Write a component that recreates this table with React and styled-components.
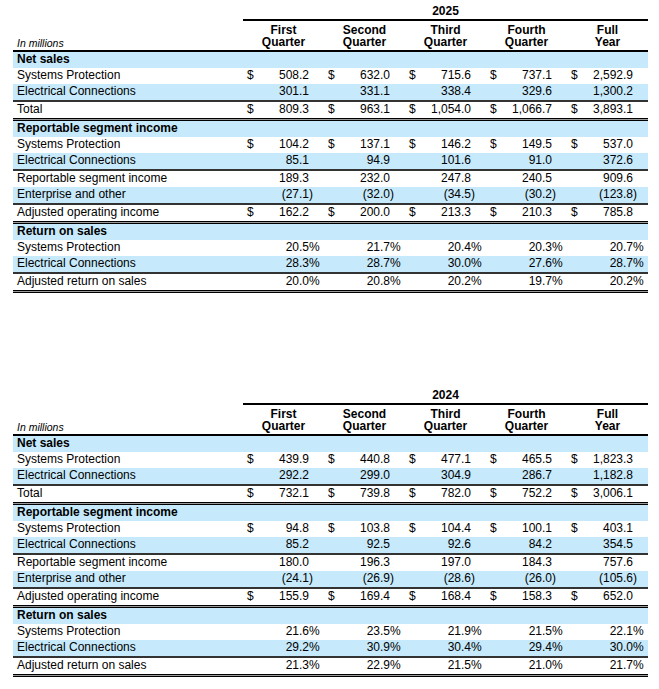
import React from 'react';
import styled, { createGlobalStyle } from 'styled-components';

const BLUE = '#c6e9fb';
const COLS = '230px 81px 81px 81px 81px 81px';
const QUARTERS = [
    ['First', 'Quarter'],
    ['Second', 'Quarter'],
    ['Third', 'Quarter'],
    ['Fourth', 'Quarter'],
    ['Full', 'Year'],
];

// values per year, same row layout for both tables
const buildSections = (v) => [
    {
        title: 'Net sales',
        lines: [
            { label: 'Systems Protection', dollar: true, values: v.netSp },
            { label: 'Electrical Connections', values: v.netEc, rule: true },
            { label: 'Total', dollar: true, values: v.netTotal },
        ],
    },
    {
        title: 'Reportable segment income',
        lines: [
            { label: 'Systems Protection', dollar: true, values: v.segSp },
            { label: 'Electrical Connections', values: v.segEc, rule: true },
            { label: 'Reportable segment income', values: v.segTotal },
            { label: 'Enterprise and other', values: v.other, rule: true },
            { label: 'Adjusted operating income', dollar: true, values: v.adj },
        ],
    },
    {
        title: 'Return on sales',
        lines: [
            { label: 'Systems Protection', values: v.rosSp },
            { label: 'Electrical Connections', values: v.rosEc, rule: true },
            { label: 'Adjusted return on sales', values: v.ros },
        ],
    },
];

const YEARS = [
    {
        year: '2025',
        sections: buildSections({
            netSp: ['508.2', '632.0', '715.6', '737.1', '2,592.9'],
            netEc: ['301.1', '331.1', '338.4', '329.6', '1,300.2'],
            netTotal: ['809.3', '963.1', '1,054.0', '1,066.7', '3,893.1'],
            segSp: ['104.2', '137.1', '146.2', '149.5', '537.0'],
            segEc: ['85.1', '94.9', '101.6', '91.0', '372.6'],
            segTotal: ['189.3', '232.0', '247.8', '240.5', '909.6'],
            other: ['(27.1)', '(32.0)', '(34.5)', '(30.2)', '(123.8)'],
            adj: ['162.2', '200.0', '213.3', '210.3', '785.8'],
            rosSp: ['20.5%', '21.7%', '20.4%', '20.3%', '20.7%'],
            rosEc: ['28.3%', '28.7%', '30.0%', '27.6%', '28.7%'],
            ros: ['20.0%', '20.8%', '20.2%', '19.7%', '20.2%'],
        }),
    },
    {
        year: '2024',
        sections: buildSections({
            netSp: ['439.9', '440.8', '477.1', '465.5', '1,823.3'],
            netEc: ['292.2', '299.0', '304.9', '286.7', '1,182.8'],
            netTotal: ['732.1', '739.8', '782.0', '752.2', '3,006.1'],
            segSp: ['94.8', '103.8', '104.4', '100.1', '403.1'],
            segEc: ['85.2', '92.5', '92.6', '84.2', '354.5'],
            segTotal: ['180.0', '196.3', '197.0', '184.3', '757.6'],
            other: ['(24.1)', '(26.9)', '(28.6)', '(26.0)', '(105.6)'],
            adj: ['155.9', '169.4', '168.4', '158.3', '652.0'],
            rosSp: ['21.6%', '23.5%', '21.9%', '21.5%', '22.1%'],
            rosEc: ['29.2%', '30.9%', '30.4%', '29.4%', '30.0%'],
            ros: ['21.3%', '22.9%', '21.5%', '21.0%', '21.7%'],
        }),
    },
];

function Value({ text, dollar }) {
    // ")" and "%" hang past the digit column like in the printed report
    const last = text.slice(-1);
    const hang = last === ')' || last === '%';
    return (
        <Cell>
            {dollar && <span>$</span>}
            <Amount>
                {hang ? text.slice(0, -1) : text}
                {hang && <Hang>{last}</Hang>}
            </Amount>
        </Cell>
    );
}

function YearTable({ year, sections }) {
    return (
        <Block>
            <YearRow>
                <YearLabel>{year}</YearLabel>
            </YearRow>
            <HeaderRow>
                <UnitLabel>In millions</UnitLabel>
                {QUARTERS.map(([a, b]) => (
                    <ColumnHead key={a}>
                        {a}
                        <br />
                        {b}
                    </ColumnHead>
                ))}
            </HeaderRow>
            {sections.map((section, i) => (
                <React.Fragment key={section.title}>
                    {i > 0 && <Rule $double />}
                    <Row $shade>
                        <Label $bold>{section.title}</Label>
                    </Row>
                    {section.lines.map((line, j) => (
                        <React.Fragment key={line.label}>
                            <Row $shade={j % 2 === 1}>
                                <Label>{line.label}</Label>
                                {line.values.map((val, k) => (
                                    <Value
                                        key={k}
                                        text={val}
                                        dollar={line.dollar}
                                    />
                                ))}
                            </Row>
                            {line.rule && <Rule />}
                        </React.Fragment>
                    ))}
                </React.Fragment>
            ))}
            <Rule $double />
        </Block>
    );
}

export default function App() {
    return (
        <>
            <GlobalStyle />
            <Page>
                {YEARS.map((y) => (
                    <YearTable key={y.year} {...y} />
                ))}
            </Page>
        </>
    );
}

const GlobalStyle = createGlobalStyle`
    body {
        margin: 0;
        background: #fff;
    }
`;

const Page = styled.div`
    width: 635px;
    padding-left: 13px;
    font-family: 'Liberation Sans', Arial, Helvetica, sans-serif;
    font-size: 12px;
    color: #000;
`;

const Block = styled.section`
    & + & {
        margin-top: 91px;
    }
`;

const YearRow = styled.div`
    display: grid;
    grid-template-columns: ${COLS};
    height: 19px;
`;

const YearLabel = styled.div`
    grid-column: 4;
    padding-top: 4px;
    text-align: center;
    font-weight: 700;
    line-height: 14px;
`;

const HeaderRow = styled.div`
    display: grid;
    grid-template-columns: ${COLS};
    height: 33px;
    box-sizing: border-box;
    border-bottom: 2px solid #000;
`;

const UnitLabel = styled.div`
    align-self: end;
    padding: 0 0 1px 4px;
    font-style: italic;
    font-size: 10.5px;
    line-height: 12px;
`;

const ColumnHead = styled.div`
    border-top: 2px solid #000;
    padding-top: 3px;
    text-align: center;
    font-weight: 700;
    line-height: 12px;
`;

const Row = styled.div`
    display: grid;
    grid-template-columns: ${COLS};
    height: 16px;
    line-height: 14px;
    white-space: nowrap;
    background: ${(p) => (p.$shade ? BLUE : '#fff')};
`;

const Label = styled.div`
    padding-left: 4px;
    font-weight: ${(p) => (p.$bold ? 700 : 400)};
`;

const Cell = styled.div`
    display: flex;
    padding: 0 15px 0 4px;
`;

const Amount = styled.span`
    margin-left: auto;
`;

const Hang = styled.span`
    display: inline-block;
    width: 0;
`;

const Rule = styled.div`
    box-sizing: border-box;
    height: ${(p) => (p.$double ? 3 : 2)}px;
    background: ${(p) => (p.$double ? '#9a9a9a' : '#333')};
    border-top: ${(p) => (p.$double ? '1px solid #000' : 'none')};
    border-bottom: ${(p) => (p.$double ? '1px solid #000' : 'none')};
`;
